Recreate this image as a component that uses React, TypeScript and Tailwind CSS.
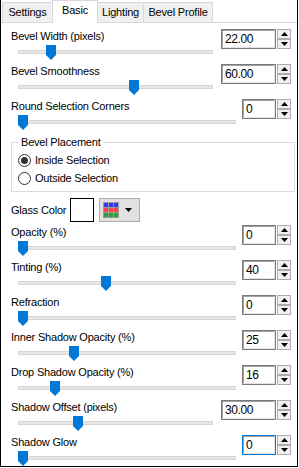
import React from 'react';

const FONT = { fontFamily: '"Liberation Sans", Arial, sans-serif' };

function Thumb({ left }: { left: number }) {
  return (
    <svg
      className="absolute top-[1px]"
      style={{ left }}
      width="10"
      height="15"
      viewBox="0 0 10 15"
    >
      <polygon points="0,0 10,0 10,10 5,15 0,10" fill="#0078d7" />
    </svg>
  );
}

function SpinArrow({ up }: { up?: boolean }) {
  return (
    <div className="flex-1 flex items-center justify-center bg-[#f0f0f0] border border-[#adadad]">
      <svg width="7" height="4" viewBox="0 0 7 4">
        {up ? <polygon points="0,4 7,4 3.5,0" fill="#000" /> : <polygon points="0,0 7,0 3.5,4" fill="#000" />}
      </svg>
    </div>
  );
}

function Spin({ value, wide, focused }: { value: string; wide?: boolean; focused?: boolean }) {
  return (
    <div className="flex gap-[1px] h-[20px] mt-[1px]">
      <div
        className={`${wide ? 'w-[55px]' : 'w-[34px]'} h-full border ${focused ? 'border-[#0078d7]' : 'border-[#7a7a7a]'} shadow-[inset_-1px_-1px_0_#e3e3e3,inset_1px_1px_0_#a0a0a0] flex items-center pl-[3px] text-[12px] tracking-[-0.4px] leading-none text-black`}
      >
        {value}
      </div>
      <div className="w-[14px] h-full flex flex-col">
        <SpinArrow up />
        <SpinArrow />
      </div>
    </div>
  );
}

interface RowProps {
  label: string;
  value: string;
  thumb: number;
  wide?: boolean;
  focused?: boolean;
}

function SliderRow({ label, value, thumb, wide, focused }: RowProps) {
  return (
    <div className="flex justify-between h-[35px] pr-[6px] shrink-0">
      <div className="flex flex-col pl-[10px]">
        <span className="h-[16px] leading-[16px] text-[11px] text-black whitespace-nowrap">{label}</span>
        <div className={`relative ml-[7px] h-[17px] ${wide ? 'w-[195px]' : 'w-[218px]'}`}>
          <div className="absolute top-[6px] left-0 right-0 h-[4px] bg-[#e7e7e7] border border-[#d6d6d6]" />
          <Thumb left={thumb} />
        </div>
      </div>
      <Spin value={value} wide={wide} focused={focused} />
    </div>
  );
}

function Radio({ label, checked }: { label: string; checked?: boolean }) {
  return (
    <div className="flex items-center h-[18px] gap-[4px]">
      <div className="w-[13px] h-[13px] rounded-full border border-[#333] flex items-center justify-center bg-white">
        {checked && <div className="w-[7px] h-[7px] rounded-full bg-[#333]" />}
      </div>
      <span className="text-[11px] text-black leading-none whitespace-nowrap">{label}</span>
    </div>
  );
}

function Tab({ label, selected, className }: { label: string; selected?: boolean; className?: string }) {
  return (
    <div
      className={`${className ?? ''} flex items-center justify-center whitespace-nowrap text-[11px] text-black border border-[#d9d9d9] ${
        selected ? 'h-[23px] bg-white border-b-0 -mb-[1px] z-10 relative pb-[3px]' : 'h-[20px] bg-[#f0f0f0] border-b-0'
      }`}
    >
      {label}
    </div>
  );
}

export default function App() {
  return (
    <div className="w-[299px] h-[468px] bg-white tracking-[-0.2px]" style={FONT}>
      <div className="w-[298px] h-[467px] border-l border-r border-b border-black flex flex-col">
        {/* tabs */}
        <div className="h-[22px] flex items-end pl-[1px] shrink-0">
          <Tab label="Settings" className="w-[51px]" />
          <Tab label="Basic" selected className="w-[46px] -ml-[1px]" />
          <Tab label="Lighting" className="w-[47px] -ml-[1px]" />
          <Tab label="Bevel Profile" className="w-[70px] -ml-[1px]" />
        </div>

        <div className="flex-1 border-t border-[#d9d9d9] flex flex-col pt-[5px]">
          <SliderRow label="Bevel Width (pixels)" value="22.00" thumb={28} wide />
          <SliderRow label="Bevel Smoothness" value="60.00" thumb={111} wide />
          <SliderRow label="Round Selection Corners" value="0" thumb={0} />

          {/* group box */}
          <div className="relative mt-[9px] ml-[10px] mr-[2px] h-[50px] border border-[#dcdcdc] pt-[8px] pl-[6px] shrink-0">
            <span className="absolute -top-[9px] left-[7px] bg-white px-[2px] text-[11px] leading-[16px] text-black whitespace-nowrap">
              Bevel Placement
            </span>
            <Radio label="Inside Selection" checked />
            <Radio label="Outside Selection" />
          </div>

          {/* glass color */}
          <div className="flex items-center h-[24px] mt-[6px] pl-[10px] shrink-0">
            <span className="text-[11px] text-black w-[59px] whitespace-nowrap">Glass Color</span>
            <div className="w-[24px] h-[24px] border border-black bg-white" />
            <div className="ml-[5px] w-[41px] h-[24px] bg-[#e1e1e1] border border-[#adadad] flex items-center pl-[3px] gap-[6px]">
              <svg width="16" height="16" viewBox="0 0 16 16">
                <rect x="0" y="0" width="16" height="16" fill="#9a9a9a" />
                <rect x="1" y="1" width="4" height="4" fill="#3535ff" />
                <rect x="6" y="1" width="4" height="4" fill="#3535ff" />
                <rect x="11" y="1" width="4" height="4" fill="#3535ff" />
                <rect x="1" y="6" width="4" height="4" fill="#ff4545" />
                <rect x="6" y="6" width="4" height="4" fill="#ff4545" />
                <rect x="11" y="6" width="4" height="4" fill="#ff4545" />
                <rect x="1" y="11" width="4" height="4" fill="#2e9e3e" />
                <rect x="6" y="11" width="4" height="4" fill="#2e9e3e" />
                <rect x="11" y="11" width="4" height="4" fill="#2e9e3e" />
              </svg>
              <svg width="7" height="4" viewBox="0 0 7 4">
                <polygon points="0,0 7,0 3.5,4" fill="#000" />
              </svg>
            </div>
          </div>

          <div className="mt-[2px] flex flex-col">
            <SliderRow label="Opacity (%)" value="0" thumb={0} />
            <SliderRow label="Tinting (%)" value="40" thumb={83} />
            <SliderRow label="Refraction" value="0" thumb={0} />
            <SliderRow label="Inner Shadow Opacity (%)" value="25" thumb={51} />
            <SliderRow label="Drop Shadow Opacity (%)" value="16" thumb={32} />
            <SliderRow label="Shadow Offset (pixels)" value="30.00" thumb={55} wide />
            <SliderRow label="Shadow Glow" value="0" thumb={0} focused />
          </div>
        </div>
      </div>
    </div>
  );
}
